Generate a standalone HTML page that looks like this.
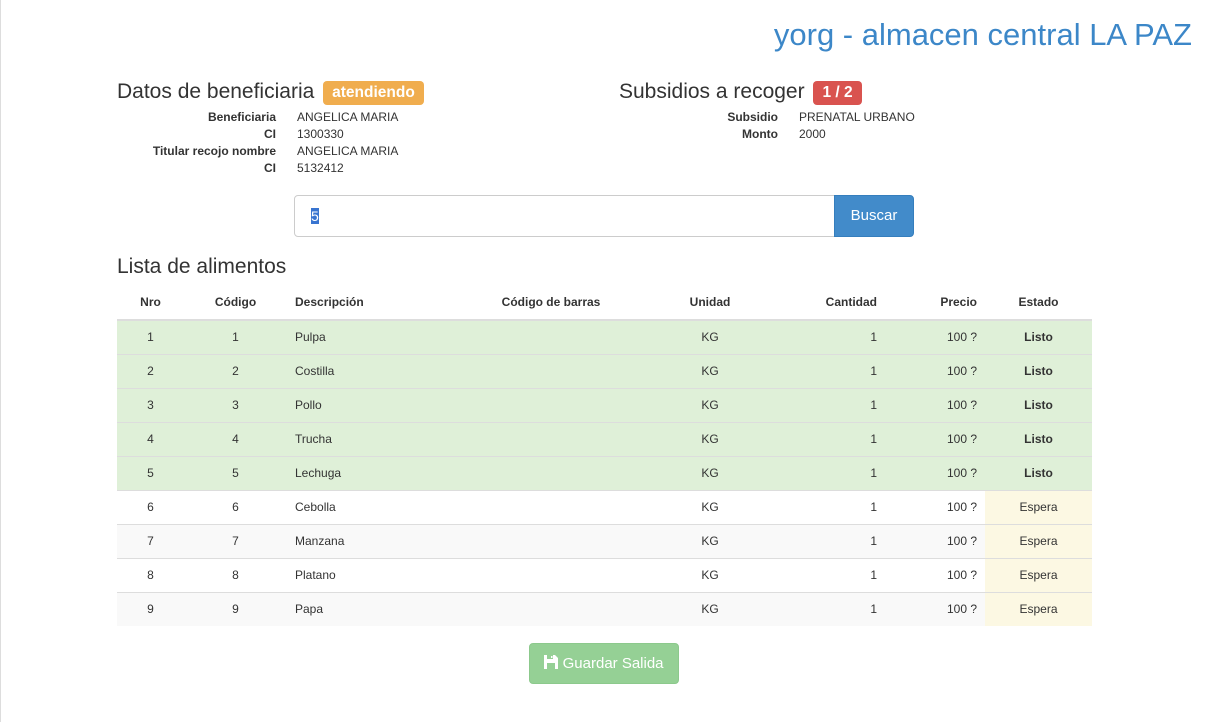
<!DOCTYPE html>
<html><head><meta charset="utf-8"><style>
*{box-sizing:border-box;margin:0;padding:0}
body{width:1206px;height:722px;background:#fff;font-family:"Liberation Sans",sans-serif;color:#333;position:relative;overflow:hidden;box-shadow:inset 1px 0 0 #ddd}
.a{position:absolute;white-space:nowrap}
h1{position:absolute;right:14px;top:17px;font-weight:normal;font-size:31px;color:#3c87c8}
h3{position:absolute;font-weight:normal;font-size:21px;color:#333}
.lbl{display:inline-block;color:#fff;font-weight:bold;font-size:15.5px;padding:3px 9px 3px;border-radius:4px;vertical-align:1px;margin-left:3px}
.dl{position:absolute;font-size:12px;line-height:17px}
.dl b{position:absolute;text-align:right;white-space:nowrap}
.dl span{position:absolute;white-space:nowrap}
table{position:absolute;left:117px;top:284px;width:975px;border-collapse:collapse;font-size:12px;table-layout:fixed}
th{height:36px;border-bottom:2px solid #ddd;font-size:12px;font-weight:bold}
td{height:34px;border-top:1px solid #ddd}
.ok td{background:#dff0d8}
.st{background:#f9f9f9}
td.w{background:#fcf8e3}
.c{text-align:center}.r{text-align:right}.l{text-align:left}
</style></head><body>
<h1>yorg - almacen central LA PAZ</h1>
<h3 style="left:117px;top:80px">Datos de beneficiaria <span class="lbl" style="background:#f0ad4e">atendiendo</span></h3>
<h3 style="left:619px;top:80px">Subsidios a recoger <span class="lbl" style="background:#d9534f">1 / 2</span></h3>
<div class="dl" style="left:0;top:109px">
<b style="right:-276px;top:0">Beneficiaria</b><span style="left:297px;top:0">ANGELICA MARIA</span>
<b style="right:-276px;top:17px">CI</b><span style="left:297px;top:17px">1300330</span>
<b style="right:-276px;top:34px">Titular recojo nombre</b><span style="left:297px;top:34px">ANGELICA MARIA</span>
<b style="right:-276px;top:51px">CI</b><span style="left:297px;top:51px">5132412</span>
</div>
<div class="dl" style="left:0;top:109px">
<b style="right:-778px;top:0">Subsidio</b><span style="left:799px;top:0">PRENATAL URBANO</span>
<b style="right:-778px;top:17px">Monto</b><span style="left:799px;top:17px">2000</span>
</div>
<div class="a" style="left:294px;top:195px;width:541px;height:42px;border:1px solid #ccc;border-radius:4px 0 0 4px"></div>
<div class="a" style="left:311px;top:208px;font-size:14px;background:#3874d0;color:#fff;line-height:16px">5</div>
<div class="a" style="left:834px;top:195px;width:80px;height:42px;background:#428bca;border:1px solid #357ebd;border-radius:0 4px 4px 0;color:#fff;font-size:15px;text-align:center;line-height:40px">Buscar</div>
<h3 style="left:117px;top:255px">Lista de alimentos</h3>
<table>
<colgroup><col style="width:67px"><col style="width:103px"><col style="width:160px"><col style="width:208px"><col style="width:110px"><col style="width:120px"><col style="width:100px"><col style="width:107px"></colgroup>
<tr><th>Nro</th><th>Código</th><th class="l" style="padding-left:8px">Descripción</th><th>Código de barras</th><th>Unidad</th><th class="r" style="padding-right:8px">Cantidad</th><th class="r" style="padding-right:8px">Precio</th><th>Estado</th></tr>
<tr class="ok"><td class="c">1</td><td class="c">1</td><td style="padding-left:8px">Pulpa</td><td></td><td class="c">KG</td><td class="r" style="padding-right:8px">1</td><td class="r" style="padding-right:8px">100 ?</td><td class="c"><b>Listo</b></td></tr>
<tr class="ok"><td class="c">2</td><td class="c">2</td><td style="padding-left:8px">Costilla</td><td></td><td class="c">KG</td><td class="r" style="padding-right:8px">1</td><td class="r" style="padding-right:8px">100 ?</td><td class="c"><b>Listo</b></td></tr>
<tr class="ok"><td class="c">3</td><td class="c">3</td><td style="padding-left:8px">Pollo</td><td></td><td class="c">KG</td><td class="r" style="padding-right:8px">1</td><td class="r" style="padding-right:8px">100 ?</td><td class="c"><b>Listo</b></td></tr>
<tr class="ok"><td class="c">4</td><td class="c">4</td><td style="padding-left:8px">Trucha</td><td></td><td class="c">KG</td><td class="r" style="padding-right:8px">1</td><td class="r" style="padding-right:8px">100 ?</td><td class="c"><b>Listo</b></td></tr>
<tr class="ok"><td class="c">5</td><td class="c">5</td><td style="padding-left:8px">Lechuga</td><td></td><td class="c">KG</td><td class="r" style="padding-right:8px">1</td><td class="r" style="padding-right:8px">100 ?</td><td class="c"><b>Listo</b></td></tr>
<tr><td class="c">6</td><td class="c">6</td><td style="padding-left:8px">Cebolla</td><td></td><td class="c">KG</td><td class="r" style="padding-right:8px">1</td><td class="r" style="padding-right:8px">100 ?</td><td class="c w">Espera</td></tr>
<tr class="st"><td class="c">7</td><td class="c">7</td><td style="padding-left:8px">Manzana</td><td></td><td class="c">KG</td><td class="r" style="padding-right:8px">1</td><td class="r" style="padding-right:8px">100 ?</td><td class="c w">Espera</td></tr>
<tr><td class="c">8</td><td class="c">8</td><td style="padding-left:8px">Platano</td><td></td><td class="c">KG</td><td class="r" style="padding-right:8px">1</td><td class="r" style="padding-right:8px">100 ?</td><td class="c w">Espera</td></tr>
<tr class="st"><td class="c">9</td><td class="c">9</td><td style="padding-left:8px">Papa</td><td></td><td class="c">KG</td><td class="r" style="padding-right:8px">1</td><td class="r" style="padding-right:8px">100 ?</td><td class="c w">Espera</td></tr>
</table>
<div class="a" style="left:529px;top:643px;width:150px;height:41px;background:#95d095;border:1px solid #8cc98c;border-radius:4px;color:#fff;font-size:15px;line-height:39px;text-align:center">
<svg width="14" height="14" viewBox="0 0 14 14" style="vertical-align:-1px"><path d="M0 0H11L14 3V14H0Z" fill="#fff"/><rect x="3" y="0" width="6" height="4" fill="#95d095"/><rect x="7" y="1" width="1.5" height="2" fill="#fff"/><rect x="3" y="8" width="8" height="6" fill="#95d095"/></svg> Guardar Salida</div>
</body></html>
